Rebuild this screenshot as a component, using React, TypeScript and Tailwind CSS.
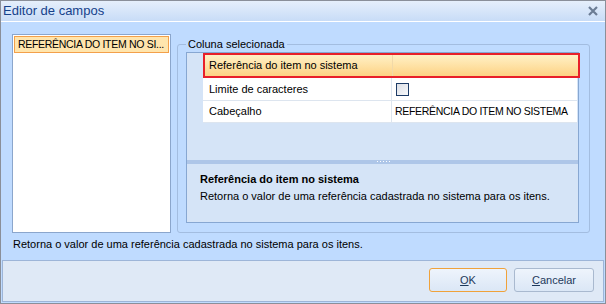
export default function App() {
  return (
    <div className="flex h-[304px] w-[606px] flex-col border border-[#8a8f99] bg-[#bfdbff] font-['Liberation_Sans',Arial,sans-serif] text-[11px] text-black">
      {/* title bar */}
      <div className="flex h-[20px] items-center justify-between bg-gradient-to-b from-[#e6effb] to-[#c8dcf7] pl-[2px] pr-[7px]">
        <span className="text-[13px] text-[#15428b]">Editor de campos</span>
        <svg width="10" height="10" viewBox="0 0 10 10">
          <path d="M1 1 L9 9 M9 1 L1 9" stroke="#6b7c94" strokeWidth="2.2" />
        </svg>
      </div>
      <div className="h-px bg-white" />

      {/* body */}
      <div className="flex flex-1 flex-col pl-[11px] pt-[12px]">
        <div className="flex">
          {/* field list */}
          <div className="h-[199px] w-[159px] border border-[#8ba6cc] bg-white p-px">
            <div className="flex h-[17px] items-center border border-[#f3a04a] bg-[#ffe5ad] pl-[3px] text-[10.5px] tracking-[-0.3px] whitespace-nowrap">
              REFERÊNCIA DO ITEM NO SI...
            </div>
          </div>

          {/* group box */}
          <fieldset className="ml-[6px] mt-[4px] h-[195px] w-[413px] rounded-[3px] border border-[#a3bde0] pl-[8px] pr-[10px]">
            <legend className="px-[2px] leading-[12px]">Coluna selecionada</legend>
            <div className="mt-[2px] flex h-[171px] flex-col border border-[#87a7d2] bg-[#d5e4f7]">
              {/* property rows */}
              <div className="flex flex-col pl-[16px]">
                <div className="-mr-[2px] flex h-[25px] items-center border-2 border-[#e8202a] bg-gradient-to-b from-[#fff1c6] to-[#fdd283]">
                  <div className="flex h-full w-[188px] items-center border-r border-[#f1d9a8] pl-[4px]">
                    Referência do item no sistema
                  </div>
                </div>
                <div className="mr-px flex h-[23px] border-b border-[#dde5ef] bg-white">
                  <div className="flex w-[189px] items-center border-r border-[#dde5ef] pl-[6px]">
                    Limite de caracteres
                  </div>
                  <div className="flex items-center pl-[4px]">
                    <div className="h-[13px] w-[13px] border border-[#1d3b66] bg-gradient-to-br from-[#dcdfe6] to-[#f8f9fb]" />
                  </div>
                </div>
                <div className="mr-px flex h-[22px] border-b border-[#dde5ef] bg-white">
                  <div className="flex w-[189px] items-center border-r border-[#dde5ef] pl-[6px]">
                    Cabeçalho
                  </div>
                  <div className="flex items-center pl-[3px] text-[10.5px] tracking-[-0.3px] whitespace-nowrap">
                    REFERÊNCIA DO ITEM NO SISTEMA
                  </div>
                </div>
              </div>
              <div className="flex-1" />

              {/* splitter */}
              <div className="flex h-[4px] justify-end bg-[#aec6e8] pr-[188px]">
                <div className="flex gap-[2px] pt-px">
                  <span className="h-px w-px bg-white" />
                  <span className="h-px w-px bg-white" />
                  <span className="h-px w-px bg-white" />
                  <span className="h-px w-px bg-white" />
                  <span className="h-px w-px bg-white" />
                </div>
              </div>

              {/* description */}
              <div className="flex h-[58px] flex-col pl-[13px] pt-[8px]">
                <span className="font-bold leading-[14px]">Referência do item no sistema</span>
                <span className="mt-[3px] leading-[14px]">Retorna o valor de uma referência cadastrada no sistema para os itens.</span>
              </div>
            </div>
          </fieldset>
        </div>

        <div className="mt-[4px] pl-[1px] leading-[14px]">
          Retorna o valor de uma referência cadastrada no sistema para os itens.
        </div>
      </div>

      {/* footer */}
      <div className="mx-[1px] mb-[1px] flex h-[42px] justify-end gap-[7px] border border-[#9db5d8] bg-[#dfe9f6] pr-[9px] pt-[7px]">
        <button
          type="button"
          className="h-[24px] w-[78px] rounded-[3px] border border-[#f0a23a] bg-gradient-to-b from-[#eef4fc] to-[#dbe7f6] text-[#1e395b]"
        >
          <span className="underline">O</span>K
        </button>
        <button
          type="button"
          className="h-[24px] w-[80px] rounded-[3px] border border-[#a9b9cf] bg-gradient-to-b from-[#eef4fc] to-[#dbe7f6] text-[#1e395b]"
        >
          <span className="underline">C</span>ancelar
        </button>
      </div>
    </div>
  );
}
